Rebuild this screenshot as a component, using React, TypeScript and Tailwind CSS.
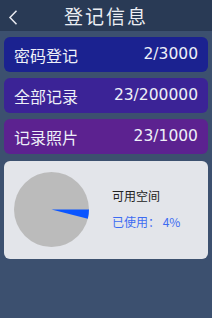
import React from "react";

const font = { fontFamily: '"Noto Sans CJK SC", "Noto Sans", sans-serif' };

function Pie() {
  const r = 37.5;
  const cx = 37.5;
  const cy = 37.5;
  const a = 0.04 * 2 * Math.PI;
  const x2 = cx + r * Math.cos(a);
  const y2 = cy + r * Math.sin(a);
  return (
    <svg width="75" height="75" viewBox="0 0 75 75">
      <circle cx={cx} cy={cy} r={r} fill="#bbbbbb" />
      <path d={`M${cx} ${cy} L${cx + r} ${cy} A${r} ${r} 0 0 1 ${x2} ${y2} Z`} fill="#0a55ff" />
    </svg>
  );
}

function Row({ label, value, bg }: { label: string; value: string; bg: string }) {
  return (
    <div className={`flex h-[35px] items-center justify-between rounded-[6px] pl-[10px] pr-[10px] text-[#eef0f8] ${bg}`}>
      <span className="text-[16px] leading-none">{label}</span>
      <span className="text-[15.5px] leading-none" style={{ fontFamily: '"DejaVu Sans", "Noto Sans CJK SC", sans-serif' }}>{value}</span>
    </div>
  );
}

export default function App() {
  return (
    <div className="flex h-[318px] w-[212px] flex-col bg-[#3c506f]" style={font}>
      <div className="relative flex h-[31px] items-center justify-center bg-[#293a55]">
        <svg className="absolute left-[8px] top-[10px]" width="10" height="15" viewBox="0 0 10 15">
          <path d="M8.5 0.8 L2 7.5 L8.5 14.2" stroke="#e8eaf0" strokeWidth="1.5" fill="none" />
        </svg>
        <span className="text-[19px] leading-none tracking-[2px] text-[#eceef3]">登记信息</span>
      </div>
      <div className="flex flex-col gap-[6px] px-[4px] pt-[6px]">
        <Row label="密码登记" value="2/3000" bg="bg-[#1b2290]" />
        <Row label="全部记录" value="23/200000" bg="bg-[#3b2396]" />
        <Row label="记录照片" value="23/1000" bg="bg-[#5c2290]" />
        <div className="mt-[1px] flex h-[98px] items-center rounded-[6px] bg-[#e3e5ea] pl-[10px] pb-[2px]">
          <Pie />
          <div className="ml-[23px] flex flex-col gap-[14px]">
            <span className="text-[12px] leading-none text-[#222222]">可用空间</span>
            <span className="text-[12px] leading-none text-[#3d6cf2]">已使用： 4%</span>
          </div>
        </div>
      </div>
    </div>
  );
}
